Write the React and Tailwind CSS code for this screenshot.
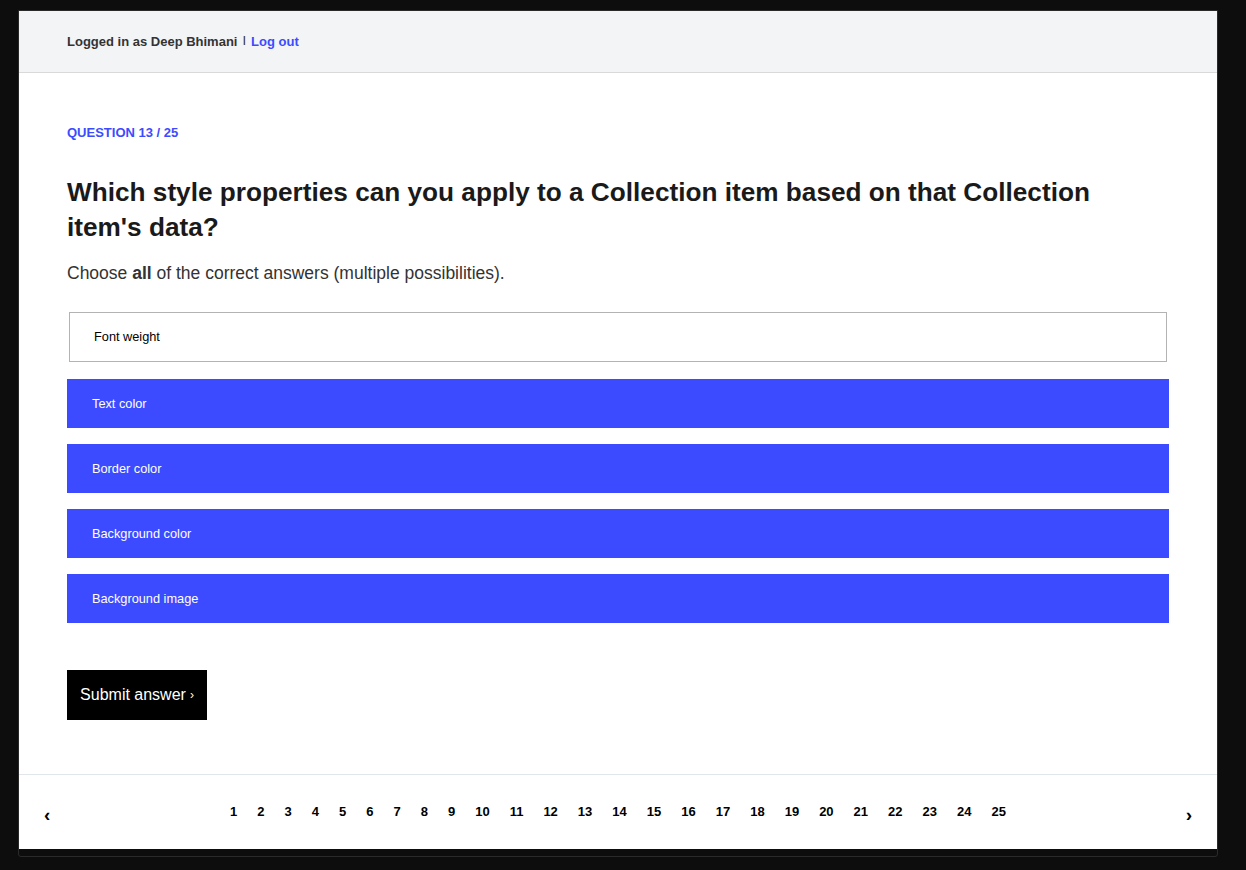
import React from 'react';

const options = [
  { label: 'Font weight', selected: false },
  { label: 'Text color', selected: true },
  { label: 'Border color', selected: true },
  { label: 'Background color', selected: true },
  { label: 'Background image', selected: true },
];

const pages = Array.from({ length: 25 }, (_, i) => i + 1);

function Option({ label, selected }) {
  if (selected) {
    return (
      <div className="h-[49px] flex items-center pl-[25px] bg-[#3c4bff] text-white text-[12.75px] cursor-pointer">
        {label}
      </div>
    );
  }
  return (
    <div className="mx-[2px] mb-[1px] h-[50px] flex items-center pl-[24px] border border-[#b3b3b3] text-black text-[12.75px] cursor-pointer">
      {label}
    </div>
  );
}

export default function App() {
  return (
    <div
      className="min-h-screen bg-[#0d0d0d] pt-[10px] px-[18px]"
      style={{ fontFamily: '"Liberation Sans", Arial, sans-serif' }}
    >
      <div className="w-[1200px] border border-[#2a2a2a] rounded-b-[3px] pb-[7px] bg-[#0d0d0d]">
        <div className="bg-white">
          {/* Header */}
          <header className="h-[62px] bg-[#f3f4f6] border-b border-[#d9d9d9] flex items-center px-[48px] text-[13px] font-bold">
            <span className="text-[#333]">Logged in as Deep Bhimani</span>
            <span className="text-[#333] mx-[5px] font-normal relative -top-[1px]">I</span>
            <a className="text-[#3c4bff]" href="#">Log out</a>
          </header>

          {/* Question */}
          <main className="px-[48px] pt-[50px] pb-[54px]">
            <div className="text-[13px] font-bold text-[#3c4bff] uppercase">Question 13 / 25</div>
            <h1 className="mt-[32px] text-[26.2px] leading-[35px] font-bold text-[#1a1a1a] max-w-[1060px]">
              Which style properties can you apply to a Collection item based on that Collection item's data?
            </h1>
            <p className="mt-[15px] text-[17.5px] text-[#333]">
              Choose <b>all</b> of the correct answers (multiple possibilities).
            </p>

            <div className="mt-[26px] flex flex-col gap-[16px]">
              {options.map((o) => (
                <Option key={o.label} {...o} />
              ))}
            </div>

            <button className="mt-[47px] w-[140px] h-[50px] bg-black text-white text-[16px] flex items-center justify-center">
              Submit answer <span className="ml-[4px] text-[12px]">›</span>
            </button>
          </main>

          {/* Pager */}
          <footer className="h-[75px] border-t border-[#e0e6ea] flex items-center justify-between px-[25px]">
            <span className="text-[19px] font-bold text-black mt-[6px]">‹</span>
            <nav className="flex items-center">
              {pages.map((p) => (
                <a key={p} href="#" className="px-[10px] text-[13px] font-bold text-black">
                  {p}
                </a>
              ))}
            </nav>
            <span className="text-[19px] font-bold text-black mt-[6px]">›</span>
          </footer>
        </div>
      </div>
    </div>
  );
}
